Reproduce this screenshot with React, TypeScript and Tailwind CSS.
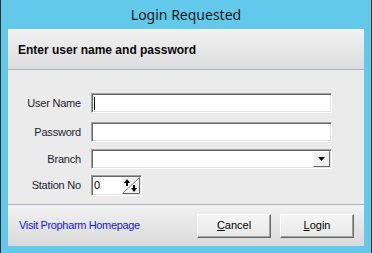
import React from "react";

const sunken =
  "border border-t-[#a0a0a0] border-l-[#a0a0a0] border-r-white border-b-white bg-white shadow-[inset_1px_1px_0_#696969,inset_-1px_-1px_0_#e3e3e3]";

function Field({ label, children }: { label: string; children: React.ReactNode }) {
  return (
    <div className="flex items-center">
      <div className="w-[73px] shrink-0 text-right text-[11px] tracking-[-0.2px] text-[#1b1b2b]">{label}</div>
      <div className="ml-[10px] flex">{children}</div>
    </div>
  );
}

function SpinButton() {
  return (
    <svg width="18" height="17" viewBox="0 0 18 17" className="block">
      <rect x="0.5" y="0.5" width="17" height="16" fill="#f0f0f0" stroke="#fff" />
      <path d="M17.5 0.5V16.5H0.5" fill="none" stroke="#696969" />
      <path d="M1 16L17 1" stroke="#808080" />
      {/* up arrow */}
      <path d="M5 2L2 6H4V9H6V6H8Z" fill="#000" />
      {/* down arrow */}
      <path d="M12 15L9 11H11V8H13V11H15Z" fill="#000" />
    </svg>
  );
}

export default function App() {
  return (
    <div
      className="flex h-[253px] w-[372px] flex-col border-x border-x-[#333] bg-[#62c9ea]"
      style={{ fontFamily: '"Liberation Sans", Arial, sans-serif' }}
    >
      <div
        className="flex h-[29px] items-center justify-center pb-[1px] text-[14px] text-[#1a1a1a]"
        style={{ fontFamily: '"Noto Sans", sans-serif' }}
      >
        Login Requested
      </div>
      <div className="ml-[7px] mr-[7px] flex h-[217px] flex-col bg-[#ebebeb]">
        <div className="flex h-[41px] items-center border-b border-b-[#a5b2c6] bg-gradient-to-b from-[#f2f2f2] to-[#dcdcdc] pl-[10px] pt-[1px] text-[12px] font-bold text-[#0a0a0a]">
          Enter user name and password
        </div>
        <div className="flex h-[134px] flex-col pt-[23px]">
          <Field label="User Name">
            <div className={`${sunken} relative h-[20px] w-[241px]`}>
              <div className="absolute left-[2px] top-[3px] h-[13px] w-px bg-black" />
            </div>
          </Field>
          <div className="mt-[9px]">
            <Field label="Password">
              <div className={`${sunken} h-[20px] w-[241px]`} />
            </Field>
          </div>
          <div className="mt-[7px]">
            <Field label="Branch">
              <div className={`${sunken} flex h-[20px] w-[241px] justify-end p-[1px]`}>
                <div className="flex w-[17px] items-center justify-center border border-t-white border-l-white border-r-[#696969] border-b-[#696969] bg-[#f0f0f0]">
                  <svg width="7" height="4" viewBox="0 0 7 4">
                    <path d="M0 0H7L3.5 4Z" fill="#000" />
                  </svg>
                </div>
              </div>
            </Field>
          </div>
          <div className="mt-[6px]">
            <Field label="Station No">
              <div className={`${sunken} flex h-[21px] w-[51px] items-center justify-between p-[1px]`}>
                <span className="pl-[1px] text-[11px] leading-none text-black">0</span>
                <SpinButton />
              </div>
            </Field>
          </div>
        </div>
        <div className="flex h-[42px] items-center border-t border-t-[#a5b2c6] bg-gradient-to-b from-[#f2f2f2] to-[#d9d9d9] pl-[11px] pr-[10px]">
          <a className="text-[11px] tracking-[-0.35px] text-[#1414f5]">Visit Propharm Homepage</a>
          <div className="ml-auto flex gap-[9px]">
            <button className="flex h-[24px] w-[74px] items-center justify-center border border-t-white border-l-white border-r-[#696969] border-b-[#696969] bg-gradient-to-b from-[#f5f5f5] to-[#e8e8e8] text-[11px] text-black shadow-[inset_-1px_-1px_0_#a0a0a0]">
              <span>
                <span className="underline">C</span>ancel
              </span>
            </button>
            <button className="flex h-[24px] w-[74px] items-center justify-center border border-t-white border-l-white border-r-[#696969] border-b-[#696969] bg-gradient-to-b from-[#f5f5f5] to-[#e8e8e8] text-[11px] text-black shadow-[inset_-1px_-1px_0_#a0a0a0]">
              <span>
                <span className="underline">L</span>ogin
              </span>
            </button>
          </div>
        </div>
      </div>
    </div>
  );
}
